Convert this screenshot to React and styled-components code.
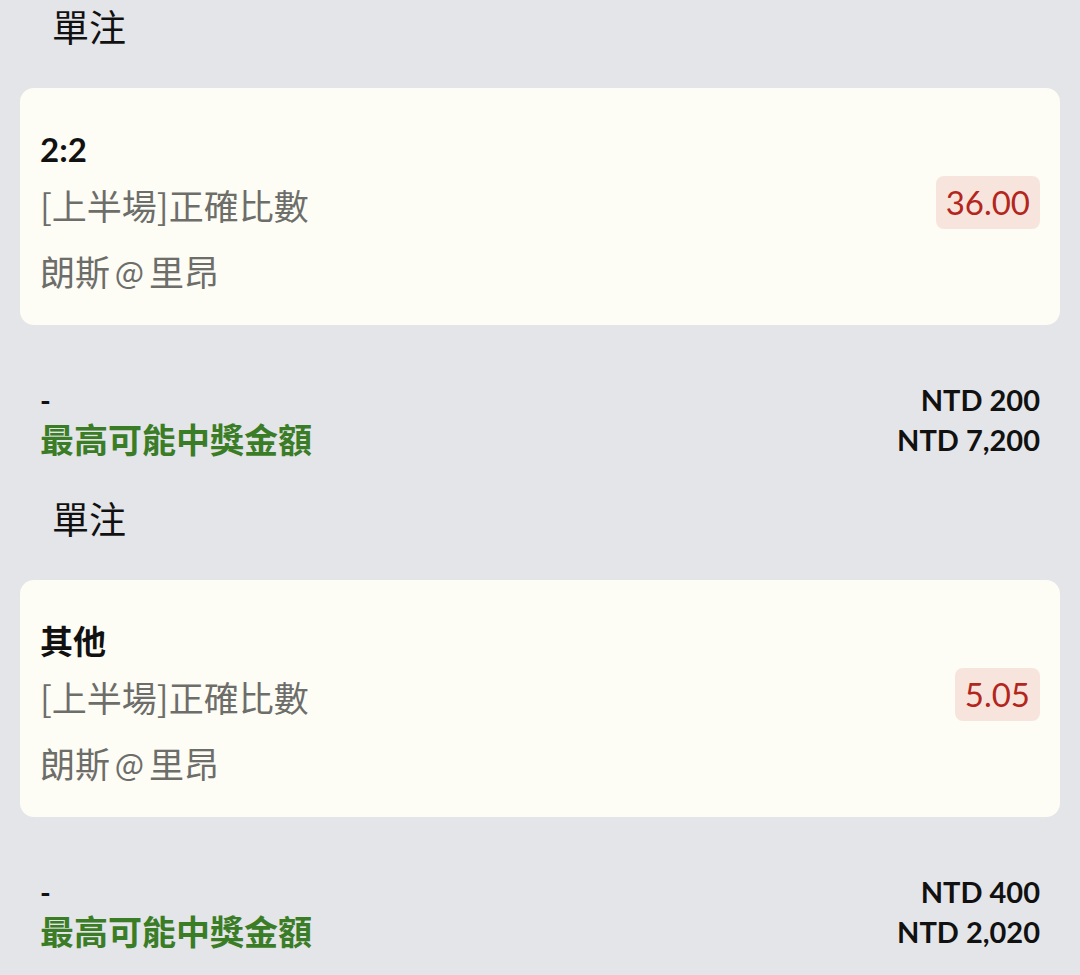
import React from 'react';
import styled, { createGlobalStyle } from 'styled-components';

const GlobalStyle = createGlobalStyle`
  body {
    margin: 0;
    background: #e4e5e8;
    font-family: 'Lato', 'Noto Sans CJK TC', sans-serif;
    color: #111;
  }
`;

const Page = styled.div`
  display: flex;
  flex-direction: column;
`;

const Section = styled.section`
  display: flex;
  flex-direction: column;
  height: 492px;
`;

const Title = styled.h2`
  margin: 0;
  padding: 4px 0 0 52px;
  height: 84px;
  font-size: 37px;
  font-weight: 400;
  line-height: 48px;
`;

const Card = styled.div`
  margin: 0 20px;
  height: 237px;
  box-sizing: border-box;
  background: #fdfdf5;
  border-radius: 14px;
  padding: 0 20px;
  display: flex;
  align-items: center;
  justify-content: space-between;
`;

const Info = styled.div`
  align-self: flex-start;
  display: flex;
  flex-direction: column;
  padding-top: 38px;
`;

const Pick = styled.div`
  font-size: 33px;
  font-weight: 700;
  line-height: 46px;
`;

const Meta = styled.div`
  font-family: 'Noto Sans CJK TC', 'Lato', sans-serif;
  font-size: 35px;
  color: #6d6d6a;
  line-height: 66px;
  word-spacing: -3px;
`;

const At = styled.span`
  font-size: 31px;
  vertical-align: 2px;
`;

const Odds = styled.div`
  background: #f7e5dd;
  color: #b3261e;
  font-size: 33px;
  line-height: 53px;
  padding: 0 10px;
  border-radius: 8px;
  margin-bottom: 8px;
`;

const Summary = styled.div`
  display: flex;
  justify-content: space-between;
  align-items: flex-end;
  padding: 55px 40px 0;
`;

const Left = styled.div`
  display: flex;
  flex-direction: column;
`;

const Right = styled.div`
  display: flex;
  flex-direction: column;
  align-items: flex-end;
`;

const Line = styled.div`
  font-size: ${(props) => (props.green ? '34px' : '29px')};
  font-weight: 700;
  line-height: 40px;
  color: ${(props) => (props.green ? '#3b7d27' : '#111')};
`;

const bets = [
  { pick: '2:2', market: '[上半場]正確比數', home: '朗斯', away: '里昂', odds: '36.00', stake: 'NTD 200', payout: 'NTD 7,200' },
  { pick: '其他', market: '[上半場]正確比數', home: '朗斯', away: '里昂', odds: '5.05', stake: 'NTD 400', payout: 'NTD 2,020' },
];

const BetSlip = ({ bet }) => (
  <Section>
    <Title>單注</Title>
    <Card>
      <Info>
        <Pick>{bet.pick}</Pick>
        <Meta>{bet.market}</Meta>
        <Meta>
          {bet.home} <At>@</At> {bet.away}
        </Meta>
      </Info>
      <Odds>{bet.odds}</Odds>
    </Card>
    <Summary>
      <Left>
        <Line>-</Line>
        <Line green>最高可能中獎金額</Line>
      </Left>
      <Right>
        <Line>{bet.stake}</Line>
        <Line>{bet.payout}</Line>
      </Right>
    </Summary>
  </Section>
);

export default function App() {
  return (
    <Page>
      <GlobalStyle />
      {bets.map((bet, i) => (
        <BetSlip key={i} bet={bet} />
      ))}
    </Page>
  );
}
